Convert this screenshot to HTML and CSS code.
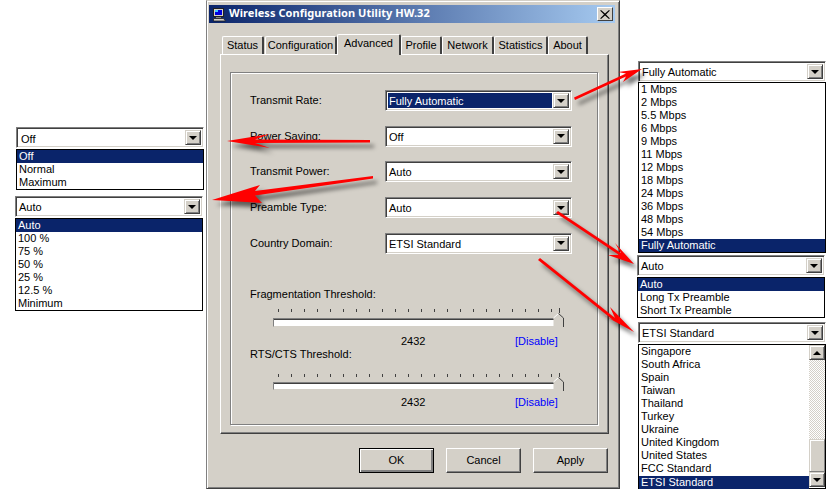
FILE: index.html
```html
<!DOCTYPE html>
<html lang="en">
<head>
<meta charset="utf-8">
<title>Wireless Configuration Utility</title>
<link rel="stylesheet" href="styles.css">
</head>
<body>
<div class="canvas">
  <section class="dialog">
    <header class="titlebar">
      <svg class="appicon" width="13" height="14" viewBox="0 0 13 14"><rect x=".5" y=".5" width="10" height="8" fill="#d4d0c8" stroke="#202020"/><rect x="2" y="2" width="7" height="5" fill="#0000e0"/><rect x="2" y="2" width="3" height="2" fill="#40c8ff"/><rect x="3" y="9" width="5" height="1" fill="#808080"/><path d="M.5 10.500h10l2 2.500H.5z" fill="#d4d0c8" stroke="#202020" stroke-width=".8"/></svg>
      <span class="title">Wireless Configuration Utility HW.32</span>
      <span class="close"><svg width="10" height="9" viewBox="0 0 10 9"><path d="M1 0l4 3.5L9 0h0.5v1L6 4.5 9.500 8v1H9L5 5.500 1 9H.5V8L4 4.500 .5 1V0z" fill="#000"/></svg></span>
    </header>
    <nav class="tabs">
      <span class="tab t1">Status</span>
      <span class="tab t2">Configuration</span>
      <span class="tab active t3">Advanced</span>
      <span class="tab t4">Profile</span>
      <span class="tab t5">Network</span>
      <span class="tab t6">Statistics</span>
      <span class="tab t7">About</span>
    </nav>
    <div class="page">
      <div class="group">
        <div class="rows">
          <div class="row"><span class="label">Transmit Rate:</span><div class="combo w187"><span class="value selected">Fully Automatic</span><span class="btn"><i class="down"></i></span></div></div>
          <div class="row"><span class="label">Power Saving:</span><div class="combo w187"><span class="value">Off</span><span class="btn"><i class="down"></i></span></div></div>
          <div class="row"><span class="label">Transmit Power:</span><div class="combo w187"><span class="value">Auto</span><span class="btn"><i class="down"></i></span></div></div>
          <div class="row"><span class="label">Preamble Type:</span><div class="combo w187"><span class="value">Auto</span><span class="btn"><i class="down"></i></span></div></div>
          <div class="row"><span class="label">Country Domain:</span><div class="combo w187"><span class="value">ETSI Standard</span><span class="btn"><i class="down"></i></span></div></div>
        </div>
        <div class="thresh first">
          <div class="tlabel">Fragmentation Threshold:</div>
          <div class="ticks"></div>
          <div class="track"><span class="thumb"><svg width="11" height="14" viewBox="0 0 11 14"><path d="M.5 14V5L5.500 .5 10.500 5v9" fill="#d4d0c8"/><path d="M.5 5L5.500 .5" stroke="#fff" fill="none"/><path d="M5.500 .5L10.500 5v9" stroke="#404040" fill="none"/></svg></span></div>
          <div class="tfoot"><span class="num">2432</span><span class="link">[Disable]</span></div>
        </div>
        <div class="thresh second">
          <div class="tlabel">RTS/CTS Threshold:</div>
          <div class="ticks"></div>
          <div class="track"><span class="thumb"><svg width="11" height="14" viewBox="0 0 11 14"><path d="M.5 14V5L5.500 .5 10.500 5v9" fill="#d4d0c8"/><path d="M.5 5L5.500 .5" stroke="#fff" fill="none"/><path d="M5.500 .5L10.500 5v9" stroke="#404040" fill="none"/></svg></span></div>
          <div class="tfoot"><span class="num">2432</span><span class="link">[Disable]</span></div>
        </div>
      </div>
    </div>
    <footer class="buttons">
      <span class="push default">OK</span>
      <span class="push">Cancel</span>
      <span class="push">Apply</span>
    </footer>
  </section>

  <div class="drop d-power">
    <div class="combo"><span class="value pad2">Off</span><span class="btn"><i class="down"></i></span></div>
    <div class="list"><div class="item on">Off</div><div class="item">Normal</div><div class="item">Maximum</div></div>
  </div>
  <div class="drop d-txpower">
    <div class="combo"><span class="value">Auto</span><span class="btn"><i class="down"></i></span></div>
    <div class="list"><div class="item on">Auto</div><div class="item">100 %</div><div class="item">75 %</div><div class="item">50 %</div><div class="item">25 %</div><div class="item">12.5 %</div><div class="item">Minimum</div></div>
  </div>
  <div class="drop d-rate">
    <div class="combo"><span class="value">Fully Automatic</span><span class="btn"><i class="down"></i></span></div>
    <div class="list"><div class="item">1 Mbps</div><div class="item">2 Mbps</div><div class="item">5.5 Mbps</div><div class="item">6 Mbps</div><div class="item">9 Mbps</div><div class="item">11 Mbps</div><div class="item">12 Mbps</div><div class="item">18 Mbps</div><div class="item">24 Mbps</div><div class="item">36 Mbps</div><div class="item">48 Mbps</div><div class="item">54 Mbps</div><div class="item on">Fully Automatic</div></div>
  </div>
  <div class="drop d-preamble">
    <div class="combo"><span class="value">Auto</span><span class="btn"><i class="down"></i></span></div>
    <div class="list"><div class="item on">Auto</div><div class="item">Long Tx Preamble</div><div class="item">Short Tx Preamble</div></div>
  </div>
  <div class="drop d-country">
    <div class="combo"><span class="value">ETSI Standard</span><span class="btn"><i class="down"></i></span></div>
    <div class="list scrolling">
      <div class="items">
        <div class="item">Singapore</div><div class="item">South Africa</div><div class="item">Spain</div><div class="item">Taiwan</div><div class="item">Thailand</div><div class="item">Turkey</div><div class="item">Ukraine</div><div class="item">United Kingdom</div><div class="item">United States</div><div class="item">FCC Standard</div><div class="item on">ETSI Standard</div>
      </div>
      <div class="sbar">
        <span class="btn sb"><i class="up"></i></span>
        <span class="strack"></span>
        <span class="sthumb"></span>
        <span class="btn sb"><i class="down"></i></span>
      </div>
    </div>
  </div>

  <svg class="arrows" width="840" height="489" viewBox="0 0 840 489">
    <g class="arrow-set">
      <path d="M574 97.500L626 73.500 618 72 642 69 623 82 626 76.500 575 100z"/>
      <path d="M370 140L255 139.500 270 134 227 141 270 148 255 143 370 142.500z"/>
      <path d="M373 176L255 191 260 185 212 200 262 203 255 195.500 373 178.500z"/>
      <path d="M558 211L621 253 615 243 634 264 608 255 619 255 556 213z"/>
      <path d="M540 258L615 318 610 307 634 332 603 315 613 320 538 260z"/>
    </g>
  </svg>
</div>
</body>
</html>
```
FILE: styles.css
```css
* { box-sizing: border-box; }
html, body { margin: 0; padding: 0; background: #fff; }
body { font: 11px/13px "Liberation Sans", Arial, sans-serif; color: #000; overflow: hidden; }
.canvas { position: relative; width: 840px; height: 489px; overflow: hidden; }

/* dialog window */
.dialog {
  position: absolute; left: 206px; top: 0; width: 414px; height: 489px;
  background: #d4d0c8;
  border: 1px solid #d4d0c8;
  border-left-color: #808080; border-right-color: #404040; border-bottom-color: #404040;
  box-shadow: inset 1px 1px 0 #fff, inset -1px -1px 0 #808080;
  padding: 4px 3px 0 2px;
  display: flex; flex-direction: column;
}
.titlebar {
  height: 18px; margin-right: 1px; display: flex; align-items: center; padding: 0 2px 0 4px; gap: 0;
  background: linear-gradient(90deg, #0a246a, #a6caf0);
  flex: none;
}
.appicon { flex: none; margin-top: 2px; }
.title { font: 700 11px/13px "Noto Sans", sans-serif; color: #fff; flex: 1; white-space: nowrap; letter-spacing: .05px; padding: 0 0 3px 3px; }
.close {
  width: 16px; height: 14px; background: #d4d0c8; display: flex; align-items: center; justify-content: center; margin-right: 0;
  border: 1px solid; border-color: #fff #404040 #404040 #fff;
}

/* tabs */
.tabs { display: flex; align-items: flex-end; height: 31px; padding-left: 13px; flex: none; }
.tab {
  height: 18px; display: flex; align-items: center; justify-content: center;
  background: #d4d0c8; border: 1px solid #fff; border-bottom: 0;
  border-right: 2px solid #404040; border-radius: 2px 2px 0 0; white-space: nowrap;
}
.t1 { width: 42px; } .t2 { width: 72px; margin-left: 1px; } .t4 { width: 41px; } .t5 { width: 52px; } .t6 { width: 54px; } .t7 { width: 40px; }
.tab.active { width: 64px; height: 21px; margin-bottom: -1px; position: relative; z-index: 1; padding-bottom: 3px; }

.page {
  margin-left: 11px; width: 389px; height: 380px; flex: none;
  border: 1px solid; border-color: #fff #404040 #404040 #fff;
  box-shadow: inset -1px -1px 0 #808080;
  padding: 17px 10px 0 9px;
}
.group {
  height: 353px; border: 1px solid #808080; box-shadow: 1px 1px 0 #fff, inset 1px 1px 0 #fff;
  padding: 17px 25px 0 19px;
}
.rows { display: flex; flex-direction: column; gap: 14.7px; }
.row { display: flex; align-items: center; justify-content: space-between; height: 21px; }
.label { white-space: nowrap; }

/* combo */
.combo {
  display: flex; height: 21px; align-items: stretch; background: #fff; padding: 2px;
  border: 1px solid; border-color: #808080 #fff #fff #808080;
  box-shadow: inset 1px 1px 0 #404040, inset -1px -1px 0 #d4d0c8;
  flex: none;
}
.w187 { width: 187px; }
.value { flex: 1; min-width: 0; padding: 1px 0 0 1px; line-height: 14px; white-space: nowrap; margin-right: 1px; }
.value.selected { background: #0a246a; color: #fff; }
.pad2 { padding: 2px 0 0 2px; }
.btn {
  width: 16px; flex: none; background: #d4d0c8; display: flex; align-items: center; justify-content: center;
  border: 1px solid; border-color: #d4d0c8 #404040 #404040 #d4d0c8;
  box-shadow: inset 1px 1px 0 #fff, inset -1px -1px 0 #808080;
}
.down, .up { display: block; width: 0; height: 0; border-left: 4px solid transparent; border-right: 4px solid transparent; }
.down { border-top: 4px solid #000; }
.up { border-bottom: 4px solid #000; }

/* thresholds */
.thresh { height: 60px; display: flex; flex-direction: column; }
.thresh.first { margin-top: 34px; }
.tlabel { height: 13px; white-space: nowrap; }
.ticks {
  height: 5px; margin: 7px 0 0 28px; width: 282px;
  background:
    linear-gradient(#404040, #404040) right 0 top 0 / 1px 5px no-repeat,
    repeating-linear-gradient(90deg, #404040 0 1px, transparent 1px 13px) 0 1px / 274px 3px no-repeat;
}
.second .ticks { margin-top: 12px; }
.track {
  position: relative; margin: 5px 0 0 23px; width: 291px; height: 9px; background: #fff;
  border: 1px solid; border-color: #808080 #d4d0c8 #d4d0c8 #808080;
  box-shadow: inset 0 1px 0 #404040;
}
.thumb { position: absolute; right: -1px; top: -6px; width: 11px; height: 14px; display: block; }
.thumb svg { display: block; }
.tfoot { position: relative; height: 13px; margin-top: 8px; }
.second .tfoot { margin-top: 6px; }
.num { position: absolute; left: 151px; top: 0; }
.link { position: absolute; left: 265px; top: 0; color: #0000ff; white-space: nowrap; }

/* footer buttons */
.buttons { display: flex; justify-content: flex-end; gap: 12px; margin-top: 14px; padding-right: 8px; flex: none; }
.push {
  width: 75px; height: 25px; display: flex; align-items: center; justify-content: center;
  border: 1px solid; border-color: #fff #404040 #404040 #fff;
  box-shadow: inset -1px -1px 0 #808080;
}
.push.default { outline: 0; border: 1px solid #000; box-shadow: inset 1px 1px 0 #fff, inset -1px -1px 0 #808080, inset -2px -2px 0 #808080; }

/* free-floating dropdown cut-outs */
.drop { position: absolute; width: 188px; }
.list { background: #fff; border: 1px solid #000; margin-top: 1px; }
.item { height: 13px; line-height: 13px; padding-left: 2px; white-space: nowrap; }
.item.on { background: #0a246a; color: #fff; }
.d-power { left: 16px; top: 127px; }
.d-txpower { left: 15px; top: 196px; }
.d-rate { left: 638px; top: 61px; }
.d-rate .list { margin-top: 0; }
.d-preamble { left: 637px; top: 255px; }
.d-country { left: 638px; top: 322px; }
.scrolling { display: flex; height: 145px; }
.items { flex: 1; min-width: 0; }
.items .item.on { margin-top: 1px; }
.sbar { width: 16px; display: flex; flex-direction: column; flex: none; }
.sb { height: 15px; width: 16px; }
.strack { height: 79px; background: repeating-conic-gradient(#d4d0c8 0 25%, #fff 0 50%) 0 0 / 2px 2px; }
.sthumb { height: 33px; background: #d4d0c8; border: 1px solid; border-color: #d4d0c8 #808080 #808080 #d4d0c8; box-shadow: inset 1px 1px 0 #fff; }

/* annotation arrows */
.arrows { position: absolute; left: 0; top: 0; pointer-events: none; }
.arrow-set { fill: #ff0000; filter: drop-shadow(4px 5px 2px rgba(0,0,0,.55)); }
```
